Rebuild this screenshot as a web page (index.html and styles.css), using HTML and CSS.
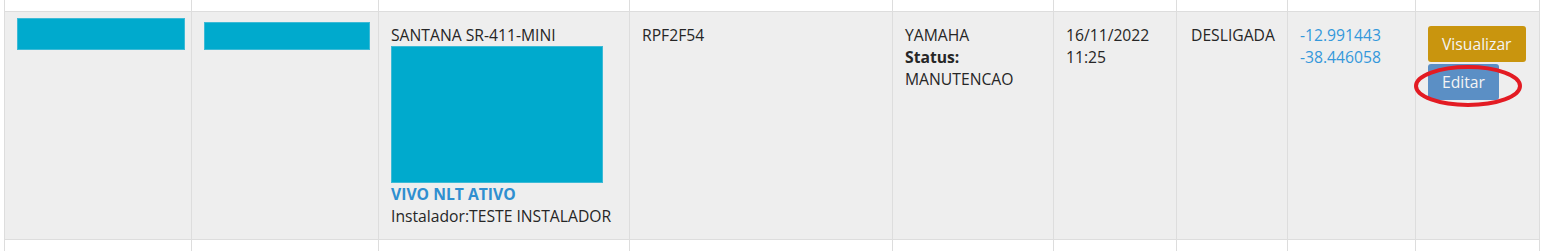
FILE: index.html
```html
<!DOCTYPE html>
<html lang="pt">
<head>
<meta charset="utf-8">
<title>Equipamentos</title>
<link rel="stylesheet" href="styles.css">
</head>
<body>
<div class="wrap">
<table class="grid">
  <colgroup>
    <col class="c1"><col class="c2"><col class="c3"><col class="c4"><col class="c5"><col class="c6"><col class="c7"><col class="c8"><col class="c9">
  </colgroup>
  <tr class="edge-top"><td></td><td></td><td></td><td></td><td></td><td></td><td></td><td></td><td></td></tr>
  <tr class="main">
    <td><div class="redact r1"></div></td>
    <td><div class="redact r2"></div></td>
    <td>
      SANTANA SR-411-MINI
      <div class="redact photo"></div>
      <div class="chip">VIVO NLT ATIVO</div>
      <div>Instalador:TESTE INSTALADOR</div>
    </td>
    <td>RPF2F54</td>
    <td>YAMAHA<br><b>Status:</b><br>MANUTENCAO</td>
    <td>16/11/2022 11:25</td>
    <td class="state">DESLIGADA</td>
    <td><a class="coord" href="#">-12.991443<br>-38.446058</a></td>
    <td>
      <div class="actions">
        <a class="btn btn-view" href="#">Visualizar</a>
        <a class="btn btn-edit" href="#">Editar</a>
        <svg class="mark" width="108" height="42" viewBox="0 0 108 42"><ellipse cx="54" cy="21" rx="52" ry="19" fill="none" stroke="#e31b23" stroke-width="4"/></svg>
      </div>
    </td>
  </tr>
  <tr class="edge-bottom"><td></td><td></td><td></td><td></td><td></td><td></td><td></td><td></td><td></td></tr>
</table>
</div>
</body>
</html>
```
FILE: styles.css
```css
html, body {
  margin: 0;
  padding: 0;
  background: #ffffff;
}
body {
  font-family: "Open Sans", "Liberation Sans", sans-serif;
  font-size: 15.7px;
  line-height: 22px;
  color: #262626;
}
.wrap {
  padding-left: 4px;
}
.grid {
  border-collapse: collapse;
  table-layout: fixed;
  width: 1536px;
}
.c1 { width: 187px; }
.c2 { width: 187px; }
.c3 { width: 251px; }
.c4 { width: 263px; }
.c5 { width: 161px; }
.c6 { width: 123px; }
.c7 { width: 111px; }
.c8 { width: 128px; }
.c9 { width: 124px; }
.grid td {
  border-left: 1px solid #dddddd;
  border-right: 1px solid #dddddd;
  padding: 0;
  vertical-align: top;
}
.edge-top td {
  height: 11px;
}
.edge-bottom td {
  height: 12px;
}
.main td {
  background: #eeeeee;
  border-top: 1px solid #dddddd;
  border-bottom: 1px solid #dddddd;
  padding: 12px;
}
.main td.state {
  padding-left: 14px;
}
.redact {
  background: #00aacd;
  box-shadow: inset 0 0 0 1px #3dbad6;
}
.r1 {
  width: 168px;
  height: 32px;
  margin-top: -6px;
}
.r2 {
  width: 166px;
  height: 28px;
  margin-top: -2px;
}
.photo {
  width: 212px;
  height: 137px;
}
.chip {
  font-weight: bold;
  color: #2f8fd0;
}
.coord {
  color: #3498db;
  text-decoration: none;
}
.actions {
  position: relative;
  display: flex;
  flex-direction: column;
  align-items: flex-start;
  gap: 2px;
  margin-top: 2px;
}
.btn {
  display: block;
  padding: 6px 13px;
  border: 1px solid transparent;
  border-radius: 3px;
  color: #f4f4f4;
  text-decoration: none;
  line-height: 22px;
}
.btn-view {
  background: #c9950e;
}
.btn-edit {
  background: #5b8fc5;
}
.mark {
  position: absolute;
  left: -14px;
  top: 39px;
}
```
